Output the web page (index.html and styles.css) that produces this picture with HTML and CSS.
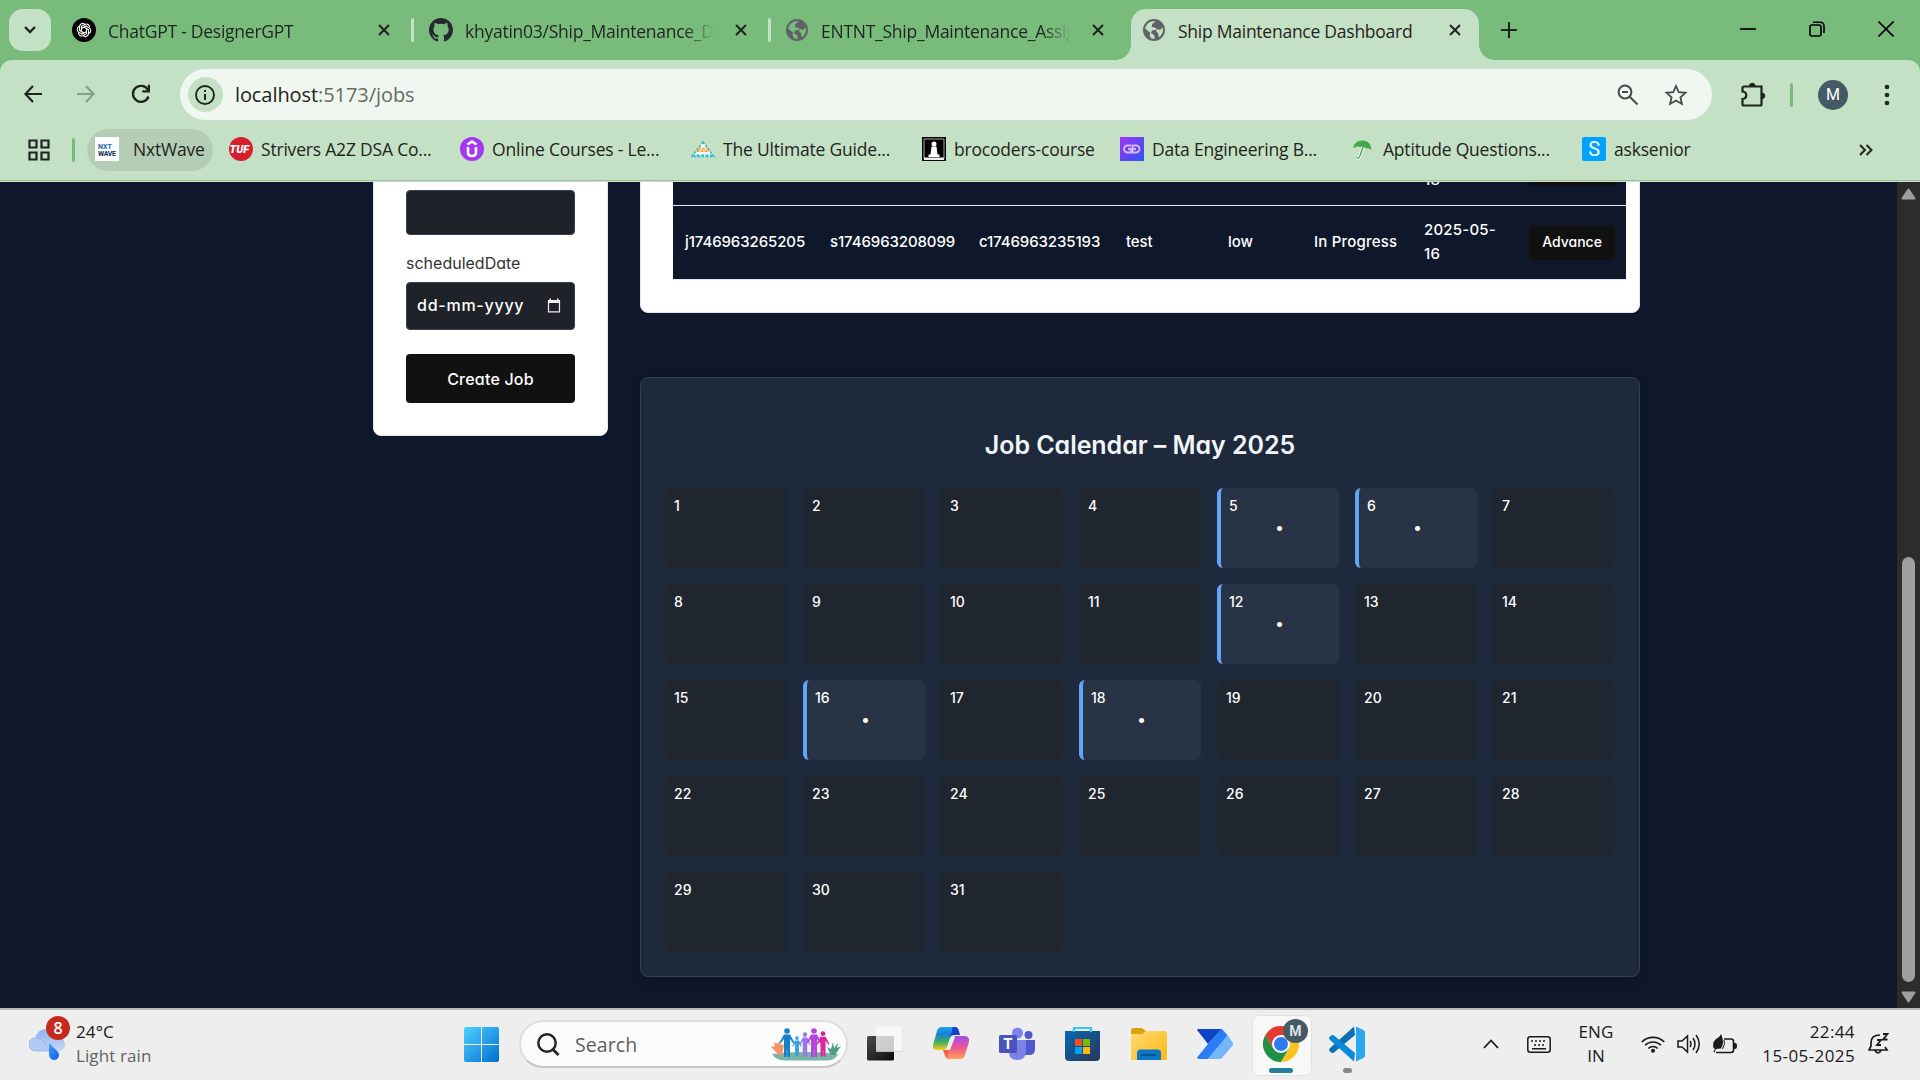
FILE: index.html
```html
<!DOCTYPE html>
<html lang="en">
<head>
<meta charset="utf-8">
<title>Ship Maintenance Dashboard</title>
<link rel="stylesheet" href="styles.css">
</head>
<body>
<svg class="defs" width="0" height="0">
  <defs>
    <symbol id="x" viewBox="0 0 12 12"><path d="M1 1l10 10M11 1L1 11" stroke="#1f2420" stroke-width="2" fill="none"/></symbol>
    <symbol id="globe" viewBox="0 0 22 22"><circle cx="11" cy="11" r="10" fill="none" stroke="#5f6368" stroke-width="2"/><path d="M11 1c4 0 8 3 9 7l-3 3-3-1-1 2 2 2 1 5-4 2c-1-2 0-4-1-5-1-1-3-1-3-3l2-2 3 0 0-2-4-1 0-3 3-2zM1.500 9l6 5-1 2 2 4c-5-1-7-6-7-11z" fill="#5f6368"/></symbol>
    <linearGradient id="win" x1="0" y1="0" x2="1" y2="1"><stop offset="0" stop-color="#4fd0ff"/><stop offset="1" stop-color="#006fd0"/></linearGradient>
    <linearGradient id="cloud" x1="0" y1="0" x2="0" y2="1"><stop offset="0" stop-color="#8fb0ee"/><stop offset="1" stop-color="#c4d8f6"/></linearGradient>
    <linearGradient id="drop" x1="0" y1="0" x2="1" y2="1"><stop offset="0" stop-color="#4a9bff"/><stop offset="1" stop-color="#0a62f0"/></linearGradient>
    <linearGradient id="cpA" x1="0" y1="0" x2="0" y2="1"><stop offset="0" stop-color="#1aa5ee"/><stop offset=".3" stop-color="#1480dd"/><stop offset=".65" stop-color="#3fae5c"/><stop offset="1" stop-color="#f7cb1b"/></linearGradient>
    <linearGradient id="cpB" x1="0" y1="0" x2="0" y2="1"><stop offset="0" stop-color="#a04ef0"/><stop offset=".5" stop-color="#ee5591"/><stop offset="1" stop-color="#ffa25a"/></linearGradient>
    <linearGradient id="fold" x1="0" y1="0" x2="1" y2="1"><stop offset="0" stop-color="#ffdb72"/><stop offset="1" stop-color="#fcb913"/></linearGradient>
    <linearGradient id="store" x1="0" y1="0" x2="1" y2="1"><stop offset="0" stop-color="#0669b4"/><stop offset="1" stop-color="#29365b"/></linearGradient>
    <linearGradient id="de" x1="0" y1="0" x2="1" y2="1"><stop offset="0" stop-color="#a234f5"/><stop offset="1" stop-color="#2d55ee"/></linearGradient>
    <linearGradient id="blk" x1="0" y1="0" x2="1" y2="1"><stop offset="0" stop-color="#4a4a4a"/><stop offset="1" stop-color="#0c0c0c"/></linearGradient>
    <g id="person"><circle cx="0" cy="3" r="2.800"/><path d="M-3 6.500h6l4.500 8-1 1-3.500-4.500V29h-2.500l-.5-9-.5 9H-3V11l-3.500 4.500-1-1z"/></g>
  </defs>
</svg>

<header class="tabstrip">
  <button class="tab-search"><svg width="14" height="10" viewBox="0 0 14 10"><path d="M2 2l5 5 5-5" stroke="#1f2420" stroke-width="2.400" fill="none"/></svg></button>
  <div class="tab">
    <svg class="fav" viewBox="0 0 24 24"><circle cx="12" cy="12" r="12"/><g fill="none" stroke="#fff" stroke-width="1.100"><path d="M9.500 13.500V8.300l3.300-1.900a3.200 3.200 0 0 1 4.700 3.100"/><path d="M9.500 13.500V8.300l3.300-1.900a3.200 3.200 0 0 1 4.700 3.100" transform="rotate(60 12 12)"/><path d="M9.500 13.500V8.300l3.300-1.900a3.200 3.200 0 0 1 4.700 3.100" transform="rotate(120 12 12)"/><path d="M9.500 13.500V8.300l3.300-1.900a3.200 3.200 0 0 1 4.700 3.100" transform="rotate(180 12 12)"/><path d="M9.500 13.500V8.300l3.300-1.900a3.200 3.200 0 0 1 4.700 3.100" transform="rotate(240 12 12)"/><path d="M9.500 13.500V8.300l3.300-1.900a3.200 3.200 0 0 1 4.700 3.100" transform="rotate(300 12 12)"/></g></svg>
    <span class="tab-title">ChatGPT - DesignerGPT</span><svg class="close"><use href="#x"/></svg>
  </div>
  <div class="tab split">
    <svg class="fav" viewBox="0 0 16 16"><path fill="#24292f" d="M8 0C3.580 0 0 3.580 0 8c0 3.540 2.290 6.530 5.470 7.590.4.070.55-.17.55-.38 0-.19-.01-.82-.01-1.490-2.010.37-2.530-.49-2.690-.94-.09-.23-.48-.94-.82-1.130-.28-.15-.68-.52-.01-.53.63-.01 1.080.58 1.230.82.72 1.210 1.870.87 2.330.66.07-.52.28-.87.51-1.070-1.780-.2-3.640-.89-3.640-3.950 0-.87.31-1.590.82-2.150-.08-.2-.36-1.020.08-2.120 0 0 .67-.21 2.200.82a7.600 7.600 0 0 1 4 0c1.530-1.040 2.200-.82 2.200-.82.44 1.100.16 1.920.08 2.120.51.56.82 1.270.82 2.150 0 3.070-1.870 3.750-3.650 3.950.29.25.54.73.54 1.480 0 1.070-.01 1.930-.01 2.200 0 .21.15.46.55.38A8.010 8.010 0 0 0 16 8c0-4.420-3.580-8-8-8z"/></svg>
    <span class="tab-title">khyatin03/Ship_Maintenance_Da</span><svg class="close"><use href="#x"/></svg>
  </div>
  <div class="tab split">
    <svg class="fav globe"><use href="#globe"/></svg>
    <span class="tab-title">ENTNT_Ship_Maintenance_Assig</span><svg class="close"><use href="#x"/></svg>
  </div>
  <div class="tab active">
    <svg class="fav globe"><use href="#globe"/></svg>
    <span class="tab-title">Ship Maintenance Dashboard</span><svg class="close"><use href="#x"/></svg>
  </div>
  <svg class="new-tab" width="16" height="16" viewBox="0 0 16 16"><path d="M8 0v16M0 8h16" stroke="#1f2420" stroke-width="2"/></svg>
  <div class="window-controls">
    <svg width="16" height="16" viewBox="0 0 16 16"><path d="M0 8h16" stroke="#000" stroke-width="1.700"/></svg>
    <svg width="16" height="16" viewBox="0 0 16 16"><rect x="1" y="4" width="11" height="11" rx="2" fill="none" stroke="#000" stroke-width="1.600"/><path d="M4 1.200h7.500a3.500 3.500 0 0 1 3.500 3.500V12" fill="none" stroke="#000" stroke-width="1.600"/></svg>
    <svg width="16" height="16" viewBox="0 0 16 16"><path d="M.5.5l15 15M15.500.5l-15 15" stroke="#000" stroke-width="1.600"/></svg>
  </div>
</header>

<div class="toolbar">
  <nav class="nav">
    <svg width="18" height="18" viewBox="0 0 18 18"><path d="M18 9H1.500M9 1L1.400 9 9 17" stroke="#1f2420" stroke-width="2.200" fill="none"/></svg>
    <svg width="18" height="18" viewBox="0 0 18 18"><path d="M0 9h16.500M9 1l7.600 8L9 17" stroke="#84a085" stroke-width="2.200" fill="none"/></svg>
    <svg width="20" height="20" viewBox="0 0 20 20"><path d="M17.500 12.500A8 8 0 1 1 17 6" stroke="#1f2420" stroke-width="2.300" fill="none"/><path d="M19 .8v7.700h-7.700V6.300h5.500V.8z" fill="#1f2420"/></svg>
  </nav>
  <div class="omnibox">
    <span class="site-info"><svg width="20" height="20" viewBox="0 0 20 20"><circle cx="10" cy="10" r="9" fill="none" stroke="#1f2420" stroke-width="1.900"/><path d="M10 9v6M10 5v2" stroke="#1f2420" stroke-width="2"/></svg></span>
    <span class="url"><b>localhost</b>:5173/jobs</span>
    <svg class="zoom" width="22" height="22" viewBox="0 0 22 22"><circle cx="8" cy="8" r="6.400" fill="none" stroke="#474b48" stroke-width="2"/><path d="M12.500 12.500l8 8M5 8h6" stroke="#474b48" stroke-width="2"/></svg>
    <svg class="star" width="24" height="24" viewBox="0 0 24 24"><path d="M12 3l2.700 6.200 6.800.6-5.100 4.500 1.500 6.700-5.900-3.500L6.100 21l1.500-6.700-5.100-4.500 6.800-.6z" fill="none" stroke="#474b48" stroke-width="1.800"/></svg>
  </div>
  <svg class="ext" width="26" height="26" viewBox="0 0 26 26"><path d="M4 4.500h17.500v17.500a1.500 1.500 0 0 1-1.500 1.500H4a1.500 1.500 0 0 1-1.500-1.500v-5c5-.5 5-7 0-7.500V6A1.500 1.500 0 0 1 4 4.500z" fill="none" stroke="#1f2420" stroke-width="2.200"/><path d="M9.500 4a2.800 2.800 0 0 1 5.600 0zM22 11a2.800 2.800 0 0 1 0 5.600z" fill="#1f2420" stroke="#1f2420"/></svg>
  <i class="bar"></i>
  <span class="profile">M</span>
  <svg class="more" width="6" height="22" viewBox="0 0 6 22"><g fill="#1f2420"><circle cx="3" cy="3" r="2.300"/><circle cx="3" cy="11" r="2.300"/><circle cx="3" cy="19" r="2.300"/></g></svg>
</div>

<div class="bookmarks">
  <svg class="apps" width="22" height="22" viewBox="0 0 22 22"><g fill="none" stroke="#1f2420" stroke-width="2.200"><path d="M1.500 1.500h7v7h-7zM13.500 1.500h7v7h-7zM1.500 13.500h7v7h-7zM13.500 13.500h7v7h-7z"/></g></svg>
  <i class="bar"></i>
  <a class="bm pill"><svg class="fav" viewBox="0 0 24 24"><path fill="#fff" d="M0 0h24v24H0z"/><text x="3" y="12" class="nxt" fill="#1769aa">NXT</text><text x="3" y="19" class="nxt" fill="#0b2d57" textLength="18">WAVE</text></svg>NxtWave</a>
  <a class="bm"><svg class="fav" viewBox="0 0 24 24"><circle cx="12" cy="12" r="12" fill="#d51f2f"/><text x="0.500" y="16" class="tuf">TUF</text></svg>Strivers A2Z DSA Co...</a>
  <a class="bm"><svg class="fav" viewBox="0 0 24 24"><circle cx="12" cy="12" r="12" fill="#a435f0"/><path d="M8 10v5.500q0 3.500 4 3.500t4-3.500V10M7.500 7.500L12 4.500l4.500 3" fill="none" stroke="#fff" stroke-width="2.600"/></svg>Online Courses - Le...</a>
  <a class="bm"><svg class="fav" viewBox="0 0 24 24"><path d="M12 5L1 19.500h22z" fill="#f2fbff"/><path d="M12 5L1 19.500h22z" fill="none" stroke="#38b6c8" stroke-width="1.600" stroke-dasharray="2.500 1.500"/><path d="M7 11.500h10M5.500 14h13" stroke="#f5a33a" stroke-width="2.200" stroke-dasharray="3 1"/><path d="M1 18.500h22" stroke="#2fb9d2" stroke-width="2" stroke-dasharray="3 1.500"/></svg>The Ultimate Guide...</a>
  <a class="bm short"><svg class="fav" viewBox="0 0 24 24"><path d="M0 0h24v24H0z"/><path d="M2 2h20v20H2z" fill="none" stroke="#aaa"/><circle cx="12" cy="7" r="2.500" fill="#fff"/><path d="M9.500 9.500h5l1 8h2V20h-11v-2.500h2z" fill="#fff"/><path d="M2 20.500h20V23H2z" fill="#eee"/></svg>brocoders-course</a>
  <a class="bm"><svg class="fav" viewBox="0 0 24 24"><path d="M0 0h24v24H0z" fill="url(#de)"/><path d="M11 8.500H7.500a3.500 3.500 0 0 0 0 7H11V12H8M12.500 8.500H16a3.500 3.500 0 0 1 0 7h-3.500zM9 12h7" fill="none" stroke="#d6b6ff" stroke-width="1.900"/></svg>Data Engineering B...</a>
  <a class="bm"><svg class="fav" viewBox="0 0 24 24"><path d="M2 11Q4 3 12 3.500T20.500 13q-3-2.500-5-1.500-3-2.500-6-1.500-3-1.500-7.500 1z" fill="#45a84c"/><path d="M12 10L8.500 20q-1 2-3 .5" fill="none" stroke="#fff" stroke-width="3.200"/><path d="M12 10L8.500 20q-1 2-3 .5" fill="none" stroke="#4ba84c" stroke-width="1.500"/></svg>Aptitude Questions...</a>
  <a class="bm last"><span class="fav s-icon">S</span>asksenior</a>
  <svg class="chev" width="14" height="12" viewBox="0 0 14 12"><path d="M1 1l5 5-5 5M7.500 1l5 5-5 5" fill="none" stroke="#1f2420" stroke-width="2"/></svg>
</div>

<main class="viewport">
  <div class="page">
    <aside class="card form">
      <div class="input"></div>
      <label>scheduledDate</label>
      <div class="input date"><span>dd-mm-yyyy</span><svg width="14" height="15" viewBox="0 0 14 15"><path d="M1.500 2.500h11v11.300h-11z" fill="none" stroke="#eee" stroke-width="1.200"/><path d="M1 2h12v3H1zM2.500.5h1.500V3H2.500zM10 .5h1.500V3H10z" fill="#eee"/></svg></div>
      <button class="create">Create Job</button>
    </aside>
    <section class="content">
      <div class="card table-card">
        <div class="row"><span></span><span></span><span></span><span></span><span></span><span></span><span><br>18</span><button class="advance"></button></div>
        <div class="row"><span>j1746963265205</span><span>s1746963208099</span><span>c1746963235193</span><span>test</span><span>low</span><span>In Progress</span><span>2025-05-<br>16</span><button class="advance">Advance</button></div>
      </div>
      <div class="calendar">
        <h2>Job Calendar – May 2025</h2>
        <div class="days">
          <div class="day">1</div><div class="day">2</div><div class="day">3</div><div class="day">4</div><div class="day job">5<i>•</i></div><div class="day job">6<i>•</i></div><div class="day">7</div>
          <div class="day">8</div><div class="day">9</div><div class="day">10</div><div class="day">11</div><div class="day job">12<i>•</i></div><div class="day">13</div><div class="day">14</div>
          <div class="day">15</div><div class="day job">16<i>•</i></div><div class="day">17</div><div class="day job">18<i>•</i></div><div class="day">19</div><div class="day">20</div><div class="day">21</div>
          <div class="day">22</div><div class="day">23</div><div class="day">24</div><div class="day">25</div><div class="day">26</div><div class="day">27</div><div class="day">28</div>
          <div class="day">29</div><div class="day">30</div><div class="day">31</div>
        </div>
      </div>
    </section>
  </div>
  <div class="scrollbar">
    <svg width="15" height="12" viewBox="0 0 15 12"><path d="M7.500 1.500L1.500 10.500h12z" fill="#9f9f9f" stroke="#9f9f9f" stroke-width="2" stroke-linejoin="round"/></svg>
    <i class="thumb"></i>
    <svg width="15" height="12" viewBox="0 0 15 12"><path d="M7.500 10.500L1.500 1.500h12z" fill="#9f9f9f" stroke="#9f9f9f" stroke-width="2" stroke-linejoin="round"/></svg>
  </div>
</main>

<footer class="taskbar">
  <div class="weather">
    <div class="weather-icon"><svg width="36" height="34" viewBox="0 0 36 34"><path d="M6 11a12 12 0 0 1 23-1q7 2 7 8t-7 6H7a6.500 6.500 0 0 1-1-13z" fill="url(#cloud)"/><path d="M0 17q0-6 7-6 6 0 9 5l4 8H7q-7 0-7-7z" fill="#b3caf3" stroke="#86a7e6" stroke-width=".6"/><path d="M20 16v12a5 5 0 1 0 9-3z" fill="url(#drop)"/></svg><span class="badge">8</span></div>
    <div class="lines"><span>24°C</span><span class="dim">Light rain</span></div>
  </div>
  <svg class="start" width="35" height="35" viewBox="0 0 35 35"><path d="M2 0h15v17H0V2a2 2 0 0 1 2-2zM18 0h15a2 2 0 0 1 2 2v15H18zM0 18h17v17H2a2 2 0 0 1-2-2zM18 18h17v15a2 2 0 0 1-2 2H18z" fill="url(#win)"/></svg>
  <div class="search">
    <svg width="23" height="23" viewBox="0 0 23 23"><circle cx="10" cy="10" r="8.700" fill="none" stroke="#222" stroke-width="2.400"/><path d="M16 16.500l5.500 5.500" stroke="#222" stroke-width="2.800"/></svg>
    <span>Search</span>
    <svg class="people" width="72" height="34" viewBox="0 0 72 34"><path d="M3 27q33-4 66 0-3 7-12 6.500H16Q7 33.500 3 27z" fill="#78b5a5"/><path d="M10 28L2 20l4-1-1-4 4 2 1-3 2 4 3 0-2 10z" fill="#f5946b"/><path d="M62 28l-4-8 4 2 2-7 1 6 4-5-1 5 4-2-6 9z" fill="#4f9d89"/><use href="#person" x="18" y="1" fill="#1880c8"/><g transform="translate(28 9) scale(.65 .7)"><use href="#person" fill="#3aa0e0"/></g><g transform="translate(36 5) scale(.75 .85)"><use href="#person" fill="#9278e8"/></g><use href="#person" x="45" y="1" fill="#b444e0"/><g transform="translate(54 4) scale(.85 .88)"><use href="#person" fill="#dc259c"/></g></svg>
  </div>
  <div class="apps-row">
    <svg viewBox="0 0 36 36"><rect y="10" width="27" height="24.500" rx="1.500" fill="url(#blk)"/><rect x="9" y="1" width="27" height="24.500" rx="1.500" fill="#fbfbfb" opacity=".78"/><path d="M9 25.500h27V2" fill="none" stroke="#ccc" stroke-width=".8"/></svg>
    <svg viewBox="0 0 36 36"><path d="M9 1h12q3 0 4 3l1 5h-6q-2 0-3 3l-3 9q-1 3-4 3H4q-5 0-4-5L4 5q1-4 5-4z" fill="url(#cpA)"/><path d="M20 1h2q3 0 4 4l1 4h-6q-3 0-4 3l2-8q0-2 1-3z" fill="#1744ce"/><path d="M27 33H16q-3 0-4-3l-2-6q4 1 6-2l4-10q1-2 3-2h8q6 0 5 6l-4 13q-1 4-5 4z" fill="url(#cpB)"/><path d="M10 24l3 7q1 2 3 2-3-1-1-5l2-6q-2 3-7 2z" fill="#f2643d"/><path d="M18 11h4l-5 13h-4z" fill="#eee"/></svg>
    <svg viewBox="0 0 36 36"><circle cx="29.500" cy="9" r="4" fill="#5059c9"/><path d="M23 14h13v9q0 6-6 6h-4z" fill="#5059c9"/><circle cx="18.500" cy="7" r="5.500" fill="#7b83eb"/><path d="M10 14h17v11q0 9-9 9-8 0-8-8z" fill="#7b83eb"/><rect y="9" width="18" height="18" rx="1.500" fill="#4b53bc"/><text x="9" y="23" class="teams">T</text></svg>
    <svg viewBox="0 0 36 36"><path d="M9 7V2h17v5" fill="none" stroke="#35c3f3" stroke-width="2.200"/><path d="M0 5h35v26q0 4-4 4H4q-4 0-4-4z" fill="url(#store)"/><path d="M9 6V3M26 6V3" stroke="#35c3f3" stroke-width="2.200"/><path d="M10 13h7v7h-7z" fill="#f25022"/><path d="M18 13h7v7h-7z" fill="#7fba00"/><path d="M10 21h7v7h-7z" fill="#00a4ef"/><path d="M18 21h7v7h-7z" fill="#ffb900"/></svg>
    <svg viewBox="0 0 36 36"><path d="M0 4q0-2 2-2h9l4 3v4H0z" fill="#dfa010"/><path d="M0 8h11l4-3h19q2 0 2 2v26q0 1-1 1H0z" fill="url(#fold)"/><path d="M6 34v-7q0-3.500 3.500-3.500h17q3.500 0 3.500 3.500v7z" fill="#0c78c4"/><path d="M10 29h15" stroke="#07508a" stroke-width="1.800"/></svg>
    <svg viewBox="0 0 36 36"><path d="M0 4l11 14L24 4V3H1z" fill="#0d45c4"/><path d="M11 18L0 31.500q.5 1.500 2 1.500h9L31 10l-5-6q-1-1-2-1z" fill="#2b7df3"/><path d="M30.500 9l5.500 8q.5 1 0 2L25 32q-1 1-2 1H11z" fill="#74b6fb"/></svg>
    <div class="running current">
      <svg viewBox="0 0 36 36"><path d="M18 0A18 18 0 0 1 18 36L25.800 22.500z" fill="#fcc31e"/><path d="M2.400 9A18 18 0 0 1 33.600 9H18l-7.800 13.500z" fill="#e63a30"/><path d="M2.400 9L10.200 22.500 25.800 22.500 18 36A18 18 0 0 1 2.400 9z" fill="#209045"/><circle cx="18" cy="18" r="9" fill="#fff"/><circle cx="18" cy="18" r="7" fill="#2d7bee"/></svg>
      <span class="badge user">M</span><i></i>
    </div>
    <div class="running">
      <svg viewBox="0 0 36 36"><path d="M26 9L5 26.500q-2 1-3.500-.5L.5 25q-1-1.500.5-3L25 .5z" fill="#0a6fb5"/><path d="M26 27L5 9.500q-2-1-3.500.5L.5 11q-1 1.500.5 3L25 35.500z" fill="#0a8ad6"/><path d="M27 .5L34.500 4q1.500.8 1.500 2.500v23q0 1.700-1.500 2.500L27 35.500z" fill="#29a8f0"/></svg>
      <i></i>
    </div>
  </div>
  <div class="tray">
    <svg width="16" height="10" viewBox="0 0 16 10"><path d="M1 9l7-7.500L15 9" fill="none" stroke="#1b1b1b" stroke-width="1.800"/></svg>
    <svg class="kbd" width="24" height="17" viewBox="0 0 24 17"><rect x=".8" y=".8" width="22.400" height="15.400" rx="2.500" fill="none" stroke="#1b1b1b" stroke-width="1.500"/><path d="M4 5h2M8 5h2M12 5h2M16 5h2M7 9h2M11 9h2M15 9h2M5 12.800h14" stroke="#1b1b1b" stroke-width="1.500"/></svg>
    <div class="lines lang"><span>ENG</span><span>IN</span></div>
    <svg class="wifi" width="24" height="18" viewBox="0 0 24 18"><g fill="none" stroke="#1b1b1b" stroke-width="1.600"><path d="M.7 7a16 16 0 0 1 22.600 0M4 10.300a11.300 11.300 0 0 1 16 0M7.300 13.500a6.700 6.700 0 0 1 9.400 0"/></g><circle cx="12" cy="15.800" r="2" fill="#1b1b1b"/></svg>
    <svg class="vol" width="24" height="20" viewBox="0 0 24 20"><g fill="none" stroke="#1b1b1b" stroke-width="1.500"><path d="M1 7h4l5.500-5v16L5 13H1zM13 7q2 3 0 6M16 4q4 6 0 12M19 1q6.500 9 0 18"/></g></svg>
    <svg class="bat" width="24" height="20" viewBox="0 0 24 20"><path d="M11 5h7q2.500 0 2.500 2.500v8.500q0 2.500-2.500 2.500H3" fill="none" stroke="#1b1b1b" stroke-width="1.600"/><path d="M21 9h1q2 0 2 3t-2 3h-1zM8 0q-1 3-5 5-4 3-2.500 9L2 15q-1 1-1.500 3l1 .5L3 15l5-.5q4-6 0-14.500z" fill="#1b1b1b"/><path d="M11 6q1.500 4-1.500 9" fill="none" stroke="#1b1b1b"/></svg>
    <div class="lines clock"><span>22:44</span><span>15-05-2025</span></div>
    <svg class="bell" width="22" height="22" viewBox="0 0 22 22"><path d="M12 2Q3 2 3 10v3l-2 4h18l-2-3M7 17.500q3 5 6 0" fill="none" stroke="#1b1b1b" stroke-width="1.700"/><path d="M9 7h4l-4 5h4M15 1h4.500L15 6.500h4.500" fill="none" stroke="#1b1b1b" stroke-width="1.800"/></svg>
  </div>
</footer>
</body>
</html>
```
FILE: styles.css
```css
* { box-sizing: border-box; }
body { margin: 0; width: 1920px; height: 1080px; overflow: hidden; display: flex; flex-direction: column; font-family: "Open Sans", sans-serif; color: #1f2420; background: #79bb7b; }
svg { flex: none; display: block; }
button { border: 0; font: inherit; padding: 0; }
.defs { position: absolute; }
.bar { width: 3px; height: 24px; border-radius: 2px; background: #79bb7b; flex: none; }
.fav { width: 24px; height: 24px; flex: none; }

.tabstrip { height: 60px; flex: none; display: flex; padding: 9px 26px 0 9px; }
.tab-search { width: 42px; height: 42px; border-radius: 14px; background: #c5e1c5; display: flex; align-items: center; justify-content: center; margin-right: 4px; }
.tab { width: 357px; height: 51px; flex: none; display: flex; align-items: center; padding: 0 22px 9px 17px; position: relative; }
.tab .globe { width: 22px; height: 22px; margin-right: 1px; }
.tab-title { flex: 1; margin-left: 12px; margin-right: 21px; font-size: 17.500px; letter-spacing: -.25px; white-space: nowrap; overflow: hidden; line-height: 30px; padding-top: 1px; -webkit-mask: linear-gradient(90deg, #000 88%, transparent); mask: linear-gradient(90deg, #000 88%, transparent); }
.close { width: 12px; height: 12px; }
.split::before { content: ""; position: absolute; left: -1px; top: 9px; width: 3px; height: 24px; background: #c5e1c5; border-radius: 2px; }
.tab.active::before { content: ""; position: absolute; left: 5px; top: 0; width: 348px; height: 51px; background: #c5e1c5; border-radius: 15px 15px 0 0; }
.tab.active::after { content: ""; position: absolute; left: -10px; bottom: 0; width: 378px; height: 15px; background: radial-gradient(circle at 0 0, transparent 14.500px, #c5e1c5 15px) 0 0/15px 15px no-repeat, radial-gradient(circle at 100% 0, transparent 14.500px, #c5e1c5 15px) 100% 0/15px 15px no-repeat; }
.tab.active > * { position: relative; z-index: 1; }
.active .tab-title { -webkit-mask: none; mask: none; overflow: visible; }
.new-tab { margin: 13px 0 0 18px; }
.window-controls { margin: 12px 0 0 auto; display: flex; gap: 53px; }

.toolbar { height: 60px; flex: none; background: #c5e1c5; border-radius: 12px 12px 0 0; display: flex; align-items: center; padding: 9px 30px 0 24px; }
.nav { display: flex; gap: 35px; align-items: center; width: 156px; padding-bottom: 1px; }
.nav svg:last-child { margin-left: 1px; }
.omnibox { width: 1533px; height: 51px; border-radius: 26px; background: #f0f7f0; display: flex; align-items: center; padding: 0 24px 0 8px; }
.site-info { width: 35px; height: 35px; border-radius: 50%; background: #c5e1c5; display: flex; align-items: center; justify-content: center; margin-right: 12px; }
.url { font-size: 20px; letter-spacing: -.07px; color: #646b65; flex: 1; }
.url b { font-weight: 400; color: #1f2420; }
.zoom { margin-right: 25px; }
.ext { margin-left: 28px; margin-right: 24px; }
.profile { width: 30px; height: 30px; border-radius: 50%; background: #455a64; color: #fff; font: 16px/30px Roboto, sans-serif; text-align: center; margin: 0 36px 0 25px; }

.bookmarks { height: 62px; flex: none; background: #c5e1c5; border-bottom: 1px solid #c5e1c5; box-shadow: inset 0 -1px #a0bda1; display: flex; align-items: center; padding: 0 47px 2px 28px; }
.bookmarks .bar { margin: 0 13px 0 22px; }
.bm { display: flex; align-items: center; gap: 8px; width: 231px; flex: none; font-size: 17.500px; line-height: 22px; letter-spacing: -.2px; white-space: nowrap; padding-bottom: 1px; }
.bm.short { width: 198px; }
.bm.last { width: 140px; }
.bm.pill { width: 126px; height: 42px; border-radius: 21px; background: #b4ceb5; padding: 0 0 1px 8px; gap: 14px; margin-right: 16px; margin-left: -1px; }
.nxt { font: 700 7px Roboto, sans-serif; letter-spacing: 0; }
.tuf { font: italic 900 11px Roboto, sans-serif; fill: #fff; letter-spacing: 0; }
.s-icon { background: #00a2ff; color: #fff; border-radius: 2px; font: 20px/24px Roboto, sans-serif; text-align: center; }
.chev { margin-left: auto; }

.viewport { height: 826px; flex: none; background: #0f172a; overflow: hidden; display: flex; font-family: Inter, sans-serif; font-feature-settings: "cv11"; }
.page { flex: 1; display: flex; gap: 32px; padding-left: 373px; align-items: flex-start; }
.card { background: #fff; border: 1px solid #e2e8f0; border-radius: 8px; }
.form { width: 235px; margin-top: -20px; height: 274px; padding: 27px 32px 32px; display: flex; flex-direction: column; }
.input { height: 45px; flex: none; background: #1f2329; border: 1px solid #334155; border-radius: 4px; color: #fff; }
.form label { font-size: 16px; line-height: 24px; color: #333; margin: 16px 0 7px; }
.date { height: 48px; display: flex; align-items: center; justify-content: space-between; padding: 0 13px 2px 10px; font-size: 16px; letter-spacing: .75px; font-weight: 500; }
.create { margin-top: 24px; height: 49px; background: #111; color: #fff; border-radius: 4px; font-size: 16px; font-weight: 500; letter-spacing: .2px; }
.content { width: 1000px; }
.table-card { margin-top: -82px; height: 213px; padding: 31px 13px 32px 32px; }
.row { height: 74px; background: #0f172a; border-bottom: 1px solid #e2e8f0; display: grid; grid-template-columns: 145px 149px 147px 102px 86px 110px 105px 86px; padding: 0 0 1px 12px; align-items: center; color: #fff; font-size: 15px; font-weight: 500; line-height: 24px; letter-spacing: -.1px; white-space: nowrap; }
.row span:nth-child(n+6) { letter-spacing: .2px; }
.advance { height: 35px; border-radius: 4px; background: #111; color: #fff; font-size: 14px; font-weight: 500; }
.calendar { margin-top: 64px; height: 600px; background: #1e293b; border: 1px solid #334155; border-radius: 8px; padding: 47px 24px 24px; box-shadow: 0 4px 8px rgba(0,0,0,.15); }
.calendar h2 { margin: 0 0 23px; font-size: 25px; line-height: 40px; font-weight: 600; text-align: center; color: #f1f5f9; letter-spacing: -.05px; }
.days { display: grid; grid-template-columns: repeat(7, 1fr); gap: 16px; }
.day { height: 80px; border-radius: 6px; background: #1f2630; color: #fff; padding: 7px 9px; font-size: 14px; font-weight: 500; line-height: 21px; }
.job { background: #283445; border-left: 4px solid #60a5fa; padding-left: 8px; }
.job i { display: block; text-align: center; font-style: normal; font-size: 16px; line-height: 23px; }
.scrollbar { width: 23px; background: #2c2c2c; display: flex; flex-direction: column; align-items: center; padding: 6px 0 5px; }
.thumb { width: 13px; height: 425px; border-radius: 7px; background: #9f9f9f; margin: 357px 0 9px; }

.taskbar { height: 72px; flex: none; background: #eee; border-top: 2px solid #b9b9b9; display: flex; align-items: center; padding-bottom: 2px; color: #1b1b1b; font-size: 17px; letter-spacing: .1px; }
.lines { display: flex; flex-direction: column; line-height: 24px; }
.dim { color: #626262; }
.weather { width: 464px; display: flex; padding-left: 29px; gap: 11px; }
.weather-icon { position: relative; padding-top: 7px; }
.badge { position: absolute; width: 24px; height: 24px; border-radius: 50%; background: #c42b1c; color: #fff; font: 600 16px/24px "Open Sans", sans-serif; text-align: center; left: 17px; top: -4px; }
.search { width: 329px; height: 48px; margin-left: 20px; border: 2px solid #dedede; border-bottom-color: #c6c6c6; border-radius: 24px; background: #fbfbfb; display: flex; align-items: center; padding: 0 5px 0 16px; font-size: 19.500px; color: #5e5e5e; }
.search span { margin-left: 15px; flex: 1; }
.apps-row { display: flex; gap: 30px; margin-left: 19px; width: 498px; }
.apps-row svg { width: 36px; height: 36px; }
.running { position: relative; width: 36px; height: 36px; }
.running > svg { position: relative; }
.running i { position: absolute; left: 14px; top: 42px; width: 9px; height: 5px; border-radius: 3px; background: #868686; }
.running.current::before { content: ""; position: absolute; left: -11px; top: -11px; width: 58px; height: 59px; border: 1px solid #e2e2e2; border-radius: 7px; background: #f8f8f8; }
.running.current i { left: 6px; width: 24px; background: #27809a; }
.badge.user { left: 20px; top: -7px; width: 25px; background: #455a64; font: 700 14px/24px Roboto, sans-serif; color: #dde3e6; }
.teams { font: 700 15px Roboto, sans-serif; fill: #fff; text-anchor: middle; }
.tray { display: flex; align-items: center; margin-left: 118px; }
.kbd { margin-left: 28px; }
.lang { width: 60px; margin-left: 15px; text-align: center; }
.wifi { margin-left: 15px; }
.vol, .bat { margin-left: 12px; }
.clock { width: 118px; text-align: right; letter-spacing: .4px; }
.bell { margin-left: 13px; }
```
